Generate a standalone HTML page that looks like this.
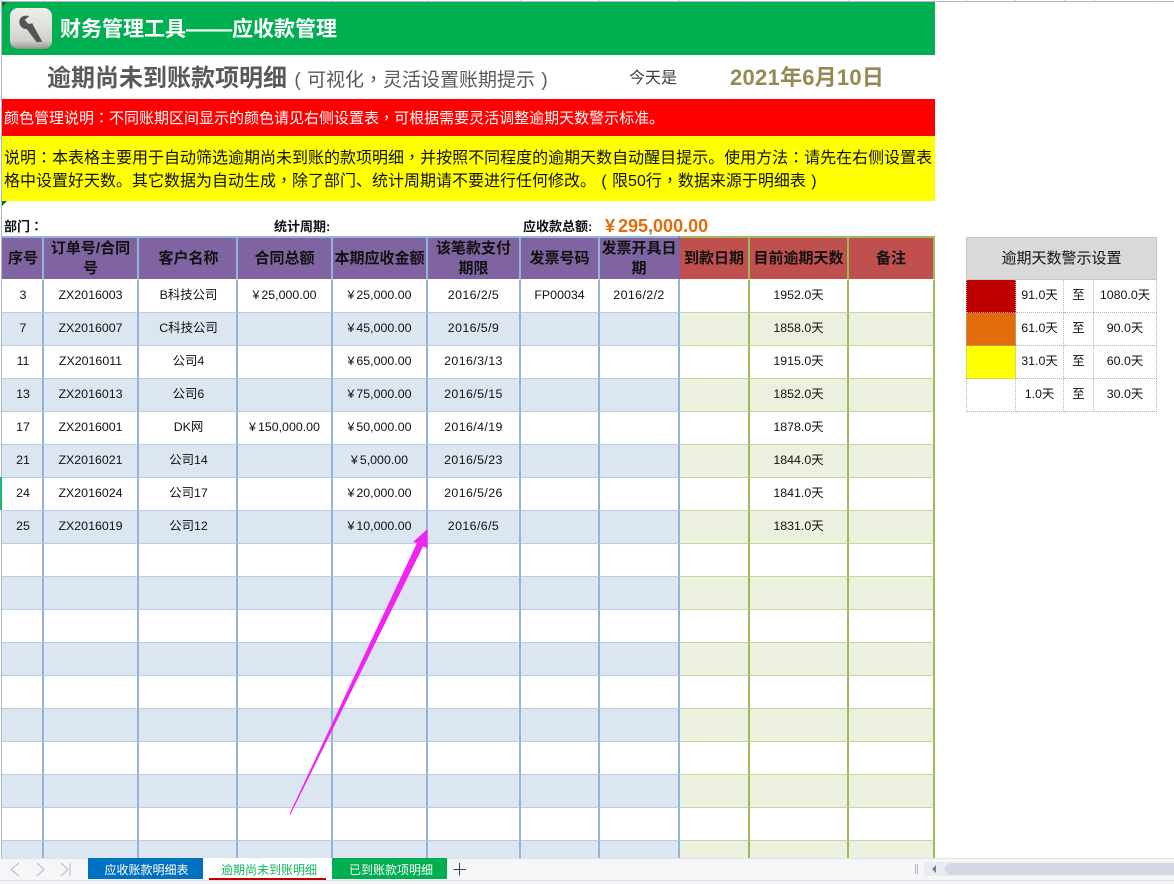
<!DOCTYPE html>
<html lang="zh"><head><meta charset="utf-8"><title>逾期尚未到账款项明细</title>
<style>
html,body{margin:0;padding:0;background:#fff}
body{width:1174px;height:884px;position:relative;overflow:hidden;font-family:"Liberation Sans","Noto Sans CJK SC",sans-serif;color:#111;text-spacing-trim:space-all}
.a{position:absolute;white-space:nowrap}
.q{font-family:"Liberation Sans","Noto Sans CJK TC",sans-serif}
.c{display:inline-block;width:1em;text-align:center}
i{font-style:normal;margin-right:2px}
#wrap{position:absolute;left:2px;top:236px;width:933px;height:622px;overflow:hidden}
table{border-collapse:separate;border-spacing:0;table-layout:fixed}
#t{width:933px}
#t td,#t th{box-sizing:border-box;padding:0;text-align:center;vertical-align:middle;font-size:12.4px;font-weight:400;height:33px;line-height:16px;border-bottom:1px solid #B8CCE4;border-right:2px solid #95B3D7;overflow:hidden;white-space:nowrap}
#t td{padding-bottom:2px}
#t td:nth-child(1),#t td:nth-child(3),#t th:nth-child(1),#t th:nth-child(3){padding-left:2px}
#t td:nth-child(6),#t td:nth-child(8){letter-spacing:.4px}
#t th{height:44px;background:#8064A2;border-top:2px solid #95B3D7;border-bottom:1px solid #fff;font-size:15px;font-weight:700;line-height:20px;white-space:nowrap;color:#111}
#t tr:nth-child(odd) td{background:#DCE6F1}
#t td:nth-child(n+9){border-bottom-color:#C4D79B;border-right-color:#9BBB59}
#t tr:nth-child(odd) td:nth-child(n+9){background:#EBF1DE}
#t th:nth-child(8){border-right-color:#8064A2}
#t th:nth-child(n+9){background:#C0504D;border-top-color:#9BBB59;border-right-color:#9BBB59}
#s{position:absolute;left:966px;top:237px;width:191px}
#s td{box-sizing:border-box;padding:0 0 2px;height:33px;line-height:16px;text-align:center;font-size:12.4px;border-right:1px dotted #B5B5B5;border-bottom:1px dotted #B5B5B5}
#s td:first-child{border-left:1px dotted #B5B5B5}
#s tr:first-child td{height:43px;background:#D9D9D9;border-top:1px dotted #B5B5B5;font-size:15px;padding:0}
.tab{position:absolute;top:858px;height:21px;line-height:24px;text-align:center;font-size:12px;color:#fff;box-sizing:border-box}
.tk{position:absolute;top:0;width:1px;height:2px;background:#C5C8D6}
</style></head><body>
<div class="a" style="left:0;top:1px;width:1174px;height:1px;background:#B4B8CC"></div>
<div class="tk" style="left:43px"></div><div class="tk" style="left:138px"></div><div class="tk" style="left:237px"></div><div class="tk" style="left:332px"></div><div class="tk" style="left:427px"></div><div class="tk" style="left:520px"></div><div class="tk" style="left:599px"></div><div class="tk" style="left:679px"></div><div class="tk" style="left:749px"></div><div class="tk" style="left:848px"></div><div class="tk" style="left:934px"></div><div class="tk" style="left:966px"></div><div class="tk" style="left:1015px"></div><div class="tk" style="left:1064px"></div><div class="tk" style="left:1094px"></div><div class="tk" style="left:1157px"></div>
<div class="a" style="left:1px;top:0;width:1px;height:858px;background:#B4B8CC"></div>

<div class="a" style="left:2px;top:2px;width:933px;height:53px;background:#00B050"></div>
<div class="a" style="left:2px;top:2px;width:0;height:0;border-top:5px solid #0B6B1F;border-right:5px solid transparent"></div>
<div class="a" style="left:10px;top:8px;width:42px;height:41px;border-radius:8px;background:linear-gradient(#EDEDEA 0%,#DEDEDA 50%,#CFCFCB 80%,#A8A8A2 94%,#8F8F88 100%)"></div>
<svg class="a" style="left:10px;top:8px" width="42" height="41" viewBox="0 0 42 41"><path d="M19.300 8C14 6.500 9.500 9 9.300 13.700C9.200 18 13 21.500 16.700 21L26.700 34.300L32.300 33.700L23.500 18L22.300 15.300L18.500 16L14.700 12Z" fill="#555"/></svg>
<div class="a" style="left:60px;top:15px;font-size:21px;line-height:30px;font-weight:700;color:#fff">财务管理工具<span style="display:inline-block;width:46px;transform:scaleX(1.1);transform-origin:0 50%">——</span>应收款管理</div>

<div class="a" style="left:47px;top:62px;font-size:24px;line-height:34px;font-weight:700;color:#595959">逾期尚未到账款项明细</div>
<div class="a" style="left:288px;top:66px;font-size:19px;line-height:30px;color:#595959"><span class="c">(</span>可视化<span class="q" lang="zh-TW">，</span>灵活设置账期提示<span class="c">)</span></div>
<div class="a" style="left:629px;top:67px;font-size:16px;line-height:24px;color:#404040">今天是</div>
<div class="a" style="left:730px;top:62px;font-size:22px;line-height:32px;font-weight:700;color:#948A54;letter-spacing:.25px">2021年6月10日</div>

<div class="a" style="left:2px;top:99px;width:933px;height:37px;background:#F00"></div>
<div class="a" style="left:4px;top:107px;font-size:15px;line-height:23px;color:#fff">颜色管理说明<span class="q" lang="zh-TW">：</span>不同账期区间显示的颜色请见右侧设置表<span class="q" lang="zh-TW">，</span>可根据需要灵活调整逾期天数警示标准。</div>
<div class="a" style="left:2px;top:136px;width:933px;height:65px;background:#FF0"></div>
<div class="a" style="left:4px;top:147px;font-size:16px;line-height:23px;color:#111">说明<span class="q" lang="zh-TW">：</span>本表格主要用于自动筛选逾期尚未到账的款项明细<span class="q" lang="zh-TW">，</span>并按照不同程度的逾期天数自动醒目提示。使用方法<span class="q" lang="zh-TW">：</span>请先在右侧设置表<br>格中设置好天数。其它数据为自动生成<span class="q" lang="zh-TW">，</span>除了部门、统计周期请不要进行任何修改。<span class="c">(</span>限50行<span class="q" lang="zh-TW">，</span>数据来源于明细表<span class="c">)</span></div>
<div class="a" style="left:2px;top:201px;width:0;height:0;border-top:5px solid #0B6B1F;border-right:5px solid transparent"></div>

<div class="a" style="left:4px;top:218px;font-size:13px;line-height:18px;font-weight:700">部门<span class="q" lang="zh-TW">：</span></div>
<div class="a" style="left:274px;top:218px;font-size:13px;line-height:18px;font-weight:700">统计周期:</div>
<div class="a" style="left:523px;top:218px;font-size:13px;line-height:18px;font-weight:700">应收款总额:</div>
<div class="a" style="left:605px;top:216px;font-size:18px;line-height:20px;font-weight:700;color:#E36C0A"><span style="margin-right:3px">¥</span>295,000.00</div>

<div id="wrap"><table id="t"><colgroup><col style="width:42px"><col style="width:95px"><col style="width:99px"><col style="width:95px"><col style="width:95px"><col style="width:93px"><col style="width:79px"><col style="width:80px"><col style="width:70px"><col style="width:99px"><col style="width:86px"></colgroup>
<tr><th>序号</th><th>订单号/合同<br>号</th><th>客户名称</th><th>合同总额</th><th>本期应收金额</th><th>该笔款支付<br>期限</th><th>发票号码</th><th>发票开具日<br>期</th><th>到款日期</th><th>目前逾期天数</th><th>备注</th></tr>
<tr><td>3</td><td>ZX2016003</td><td>B科技公司</td><td><i>¥</i>25,000.00</td><td><i>¥</i>25,000.00</td><td>2016/2/5</td><td>FP00034</td><td>2016/2/2</td><td></td><td>1952.0天</td><td></td></tr>
<tr><td>7</td><td>ZX2016007</td><td>C科技公司</td><td></td><td><i>¥</i>45,000.00</td><td>2016/5/9</td><td></td><td></td><td></td><td>1858.0天</td><td></td></tr>
<tr><td>11</td><td>ZX2016011</td><td>公司4</td><td></td><td><i>¥</i>65,000.00</td><td>2016/3/13</td><td></td><td></td><td></td><td>1915.0天</td><td></td></tr>
<tr><td>13</td><td>ZX2016013</td><td>公司6</td><td></td><td><i>¥</i>75,000.00</td><td>2016/5/15</td><td></td><td></td><td></td><td>1852.0天</td><td></td></tr>
<tr><td>17</td><td>ZX2016001</td><td>DK网</td><td><i>¥</i>150,000.00</td><td><i>¥</i>50,000.00</td><td>2016/4/19</td><td></td><td></td><td></td><td>1878.0天</td><td></td></tr>
<tr><td>21</td><td>ZX2016021</td><td>公司14</td><td></td><td><i>¥</i>5,000.00</td><td>2016/5/23</td><td></td><td></td><td></td><td>1844.0天</td><td></td></tr>
<tr><td>24</td><td>ZX2016024</td><td>公司17</td><td></td><td><i>¥</i>20,000.00</td><td>2016/5/26</td><td></td><td></td><td></td><td>1841.0天</td><td></td></tr>
<tr><td>25</td><td>ZX2016019</td><td>公司12</td><td></td><td><i>¥</i>10,000.00</td><td>2016/6/5</td><td></td><td></td><td></td><td>1831.0天</td><td></td></tr>
<tr><td></td><td></td><td></td><td></td><td></td><td></td><td></td><td></td><td></td><td></td><td></td></tr>
<tr><td></td><td></td><td></td><td></td><td></td><td></td><td></td><td></td><td></td><td></td><td></td></tr>
<tr><td></td><td></td><td></td><td></td><td></td><td></td><td></td><td></td><td></td><td></td><td></td></tr>
<tr><td></td><td></td><td></td><td></td><td></td><td></td><td></td><td></td><td></td><td></td><td></td></tr>
<tr><td></td><td></td><td></td><td></td><td></td><td></td><td></td><td></td><td></td><td></td><td></td></tr>
<tr><td></td><td></td><td></td><td></td><td></td><td></td><td></td><td></td><td></td><td></td><td></td></tr>
<tr><td></td><td></td><td></td><td></td><td></td><td></td><td></td><td></td><td></td><td></td><td></td></tr>
<tr><td></td><td></td><td></td><td></td><td></td><td></td><td></td><td></td><td></td><td></td><td></td></tr>
<tr><td></td><td></td><td></td><td></td><td></td><td></td><td></td><td></td><td></td><td></td><td></td></tr>
<tr><td></td><td></td><td></td><td></td><td></td><td></td><td></td><td></td><td></td><td></td><td></td></tr>
</table></div>
<div class="a" style="left:0;top:477px;width:2px;height:33px;background:#1FB573"></div>

<table id="s"><colgroup><col style="width:50px"><col style="width:48px"><col style="width:30px"><col style="width:63px"></colgroup>
<tr><td colspan="4">逾期天数警示设置</td></tr>
<tr><td style="background:#C00000"></td><td>91.0天</td><td>至</td><td>1080.0天</td></tr>
<tr><td style="background:#E36C0A"></td><td>61.0天</td><td>至</td><td>90.0天</td></tr>
<tr><td style="background:#FF0"></td><td>31.0天</td><td>至</td><td>60.0天</td></tr>
<tr><td></td><td>1.0天</td><td>至</td><td>30.0天</td></tr>
</table>

<svg class="a" style="left:0;top:0" width="1174" height="884" viewBox="0 0 1174 884"><path d="M289.500 814L417 543L413 542L427.500 529L427.500 548L423 546.500L290.500 814.500Z" fill="#F024F2"/></svg>

<div class="a" style="left:0;top:858px;width:1174px;height:26px;background:#F5F6F8"></div>
<div class="a" style="left:0;top:858px;width:1174px;height:1px;background:#E2E3EA"></div>
<div class="a" style="left:0;top:880px;width:1174px;height:1px;background:#E2E3EA"></div>
<svg class="a" style="left:0;top:858px" width="80" height="22" viewBox="0 0 80 22" fill="none" stroke="#B4B7BF" stroke-width="1"><path d="M19 5L11 11.500L19 18"/><path d="M37 5L44 11.500L37 18"/><path d="M61 5L68 11.500L61 18"/><path d="M70 5V18"/></svg>
<div class="tab" style="left:88px;width:115px;padding-left:2px;background:#0070C0">应收账款明细表</div>
<div class="tab" style="left:204px;width:128px;height:22px;padding-left:2px;background:#fff;color:#12B566">逾期尚未到账明细</div>
<div class="a" style="left:209px;top:878px;width:117px;height:2px;background:#C00000"></div>
<div class="tab" style="left:332px;width:115px;padding-left:3px;background:#00B050">已到账款项明细</div>
<svg class="a" style="left:453px;top:862px" width="14" height="14" viewBox="0 0 14 14" stroke="#3C4353" stroke-width="1"><path d="M0.500 7.500H13M6.500 1V13.500"/></svg>
<div class="a" style="left:915px;top:864px;width:1px;height:10px;background:#B4B7C0"></div>
<div class="a" style="left:917px;top:864px;width:1px;height:10px;background:#B4B7C0"></div>
<div class="a" style="left:924px;top:862px;width:250px;height:14px;background:#E9EBF0"></div>
<div class="a" style="left:932px;top:865px;width:0;height:0;border-top:4px solid transparent;border-bottom:4px solid transparent;border-right:4px solid #6F7E9B"></div>
<div class="a" style="left:945px;top:863px;width:229px;height:12px;background:#D5D8E0;border-radius:6px 0 0 6px"></div>
</body></html>
